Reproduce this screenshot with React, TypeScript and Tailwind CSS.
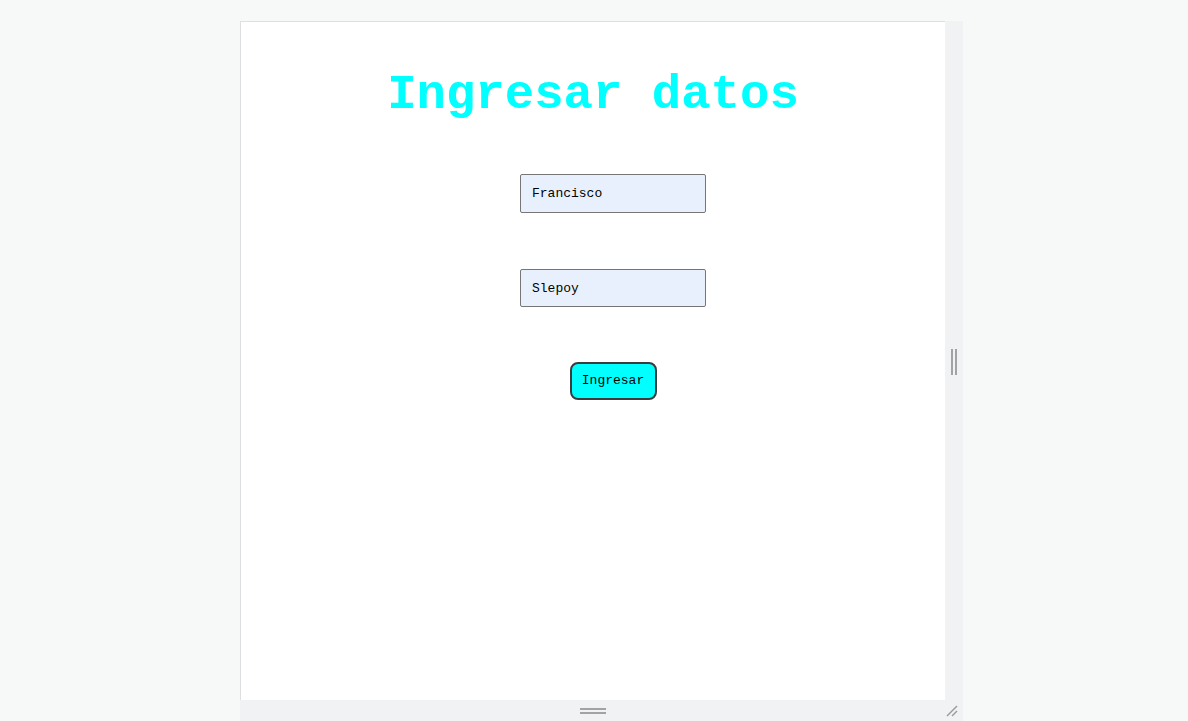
import React from "react";

export default function App() {
  const mono = { fontFamily: '"Liberation Mono", "Courier New", monospace' };
  return (
    <div className="min-h-screen w-full bg-[#f7f8f8] pt-[21px] pl-[240px]">
      <div className="flex w-[723px] flex-col">
        <div className="flex h-[679px]">
          <div className="w-[705px] border-l border-t border-[#dedfe0] bg-white" style={mono}>
            <h1 className="pt-[45px] text-center text-[49px] font-bold leading-[56px] text-[#00ffff]">
              Ingresar datos
            </h1>
            <form className="flex flex-col items-center pl-[40px] pt-[51px]" onSubmit={(e) => e.preventDefault()}>
              <input
                defaultValue="Francisco"
                className="h-[39px] w-[186px] rounded-[2px] border border-[#767676] bg-[#e8f0fe] px-[11px] text-[13px] text-black outline-none"
                style={mono}
              />
              <input
                defaultValue="Slepoy"
                className="mt-[56px] h-[38px] w-[186px] rounded-[2px] border border-[#767676] bg-[#e8f0fe] px-[11px] text-[13px] text-black outline-none"
                style={mono}
              />
              <button
                type="submit"
                className="mt-[55px] h-[38px] w-[87px] rounded-[8px] border-2 border-[#3c3c3c] bg-[#00ffff] text-[13px] text-black"
                style={mono}
              >
                Ingresar
              </button>
            </form>
          </div>
          <div className="flex w-[18px] items-center justify-center bg-[#f1f2f4] pt-[2px]">
            <div className="flex gap-[2px]">
              <div className="h-[26px] w-[2px] bg-[#a3a3a3]" />
              <div className="h-[26px] w-[2px] bg-[#a3a3a3]" />
            </div>
          </div>
        </div>
        <div className="relative flex h-[21px] items-center justify-center bg-[#f1f2f4] pr-[18px]">
          <div className="flex flex-col gap-[2px]">
            <div className="h-[2px] w-[26px] bg-[#a3a3a3]" />
            <div className="h-[2px] w-[26px] bg-[#a3a3a3]" />
          </div>
          <svg className="absolute right-[4px] bottom-[3px]" width="14" height="14" viewBox="0 0 14 14">
            <line x1="2" y1="12" x2="12" y2="2" stroke="#9a9a9a" strokeWidth="1.5" />
            <line x1="7" y1="12" x2="12" y2="7" stroke="#9a9a9a" strokeWidth="1.5" />
          </svg>
        </div>
      </div>
    </div>
  );
}
